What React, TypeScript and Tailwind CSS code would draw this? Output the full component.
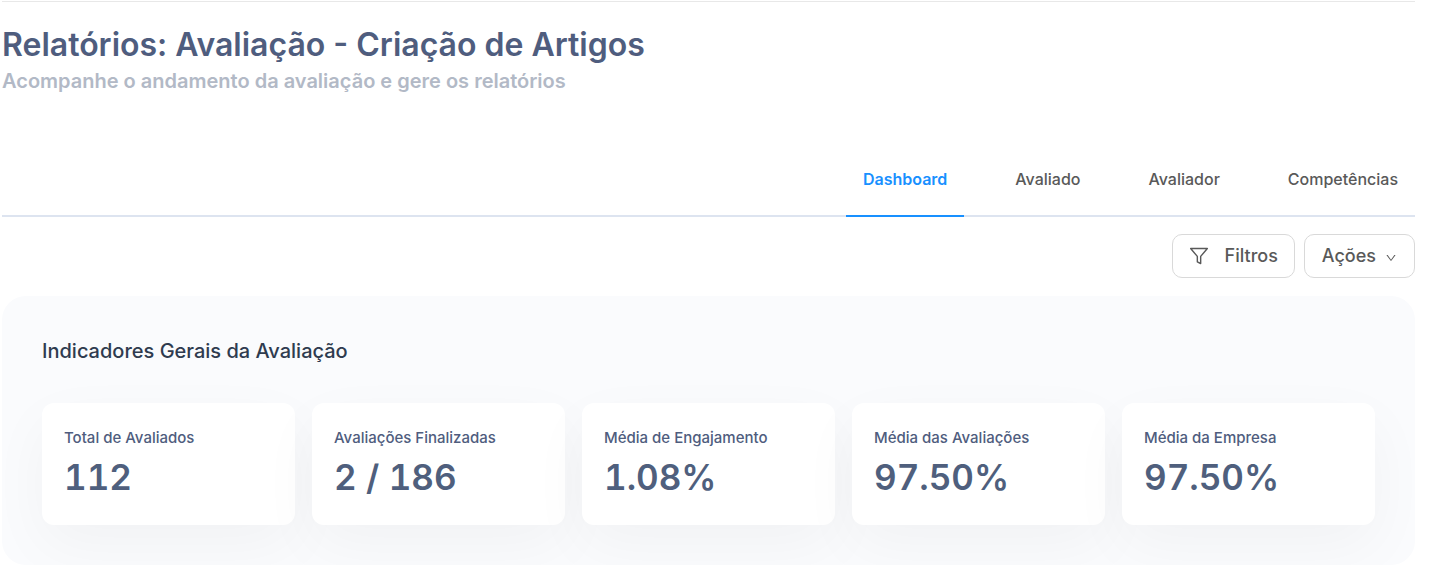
import { AiOutlineDown } from "react-icons/ai";
import { FiFilter } from "react-icons/fi";

type Indicator = {
  label: string;
  value: string;
};

const tabs = ["Dashboard", "Avaliado", "Avaliador", "Competências"];

const indicators: Indicator[] = [
  { label: "Total de Avaliados", value: "112" },
  { label: "Avaliações Finalizadas", value: "2 / 186" },
  { label: "Média de Engajamento", value: "1.08%" },
  { label: "Média das Avaliações", value: "97.50%" },
  { label: "Média da Empresa", value: "97.50%" },
];

const PageHeader = () => (
  <header className="pt-[23px]">
    <h1 className="text-[32px] leading-10 font-semibold text-[#4f5d7e]">
      Relatórios: Avaliação - Criação de Artigos
    </h1>
    <p className="mt-0.5 text-xl leading-7 font-semibold text-[#b2b9c6]">
      Acompanhe o andamento da avaliação e gere os relatórios
    </p>
  </header>
);

const Tabs = ({ active }: { active: string }) => (
  <nav className="mt-12 flex justify-end gap-[34px] border-b-2 border-[#dde4f0]">
    {tabs.map((tab) => (
      <a
        key={tab}
        href="#"
        className={
          tab === active
            ? "-mb-0.5 border-b-2 border-[#1890ff] px-[17px] py-6 text-base leading-6 font-semibold text-[#1890ff]"
            : "-mb-0.5 border-b-2 border-transparent px-[17px] py-6 text-base leading-6 font-medium text-[#595959]"
        }
      >
        {tab}
      </a>
    ))}
  </nav>
);

const Toolbar = () => (
  <div className="mt-[17px] flex justify-end gap-[9px]">
    <button
      type="button"
      className="flex h-11 items-center rounded-[10px] border border-[#d9d9d9] bg-white px-4 text-lg font-medium text-[#595959]"
    >
      <FiFilter className="mr-4 size-5" strokeWidth={1.7} />
      Filtros
    </button>
    <button
      type="button"
      className="flex h-11 items-center rounded-[10px] border border-[#d9d9d9] bg-white px-[17px] text-lg font-medium text-[#595959]"
    >
      Ações
      <AiOutlineDown className="mt-1 ml-[9px] size-3" />
    </button>
  </div>
);

const IndicatorCard = ({ label, value }: Indicator) => (
  <div className="rounded-xl bg-white px-[22px] pt-[23px] pb-6 shadow-[0_20px_60px_rgba(0,0,0,0.04)]">
    <h3 className="text-[15px] leading-6 font-medium text-[#4f5d7e]">
      {label}
    </h3>
    <p className="mt-[3px] text-[35px] leading-12 font-semibold text-[#4f5f7d] tabular-nums">
      {value}
    </p>
  </div>
);

const App = () => {
  return (
    <div className="bg-white pt-px pr-[19px] pl-[2px] font-['Inter',sans-serif]">
      <div className="border-t border-[#e8e8e8]">
        <PageHeader />
        <Tabs active="Dashboard" />
        <Toolbar />

        <section className="mt-[18px] rounded-3xl bg-[#fafbfd] px-10 pt-[41px] pb-10">
          <h2 className="text-xl leading-7 font-medium text-[#2f3b4f]">
            Indicadores Gerais da Avaliação
          </h2>
          <div className="mt-[38px] grid grid-cols-5 gap-[17px]">
            {indicators.map((indicator) => (
              <IndicatorCard key={indicator.label} {...indicator} />
            ))}
          </div>
        </section>
      </div>
    </div>
  );
};

export default App;
